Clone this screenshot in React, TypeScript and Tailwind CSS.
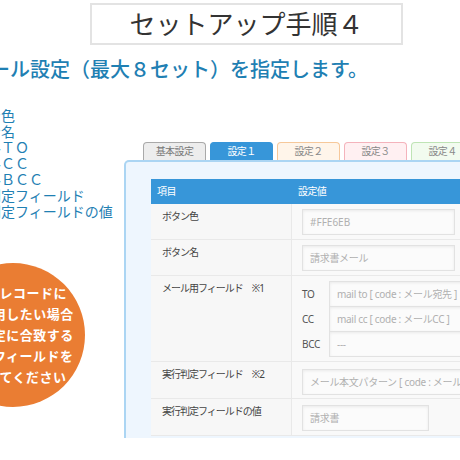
const FONT = "font-['Noto_Sans','Noto_Sans_CJK_JP',sans-serif]";

const listItems = [
  "・ボタン色",
  "・ボタン名",
  "・メールＴＯ",
  "・メールＣＣ",
  "・メールＢＣＣ",
  "・実行判定フィールド",
  "・実行判定フィールドの値",
];

const circleLines = [
  "特定のレコードに",
  "のみ適用したい場合",
  "実行判定に合致する",
  "判定用フィールドを",
  "指定してください",
];

const tabs = [
  { label: "基本設定", cls: "border-[#a9a9a9] bg-[#ededed] text-[#777]" },
  { label: "設定１", cls: "border-[#3796d9] bg-[#3796d9] text-white" },
  { label: "設定２", cls: "border-[#f6c89a] bg-[#fff5ea] text-[#888]" },
  { label: "設定３", cls: "border-[#f4b3bc] bg-[#fff0f2] text-[#888]" },
  { label: "設定４", cls: "border-[#bfe4b5] bg-[#f2fbef] text-[#888]" },
];

function Field({ text, className = "" }: { text: string; className?: string }) {
  return (
    <div
      className={`h-[26px] flex items-center pl-[7px] border border-[#e2e2e2] bg-[#fbfbfb] shadow-[inset_0_1px_3px_rgba(0,0,0,0.07)] text-[10px] tracking-[-0.3px] text-[#b0b0b0] whitespace-nowrap overflow-hidden ${className}`}
    >
      {text}
    </div>
  );
}

function Row({ label, children, h }: { label: string; children: React.ReactNode; h: string }) {
  return (
    <div className={`grid grid-cols-[141px_1fr] border-b border-[#e9e9e9] ${h}`}>
      <div className="bg-[#f7f7f7] border-r border-[#e9e9e9] pl-[11px] pt-[4px] text-[10px] leading-[16px] tracking-[-1px] text-[#444] whitespace-pre">
        {label}
      </div>
      <div className="bg-[#f9f9f9] pl-[10px] pt-[5px]">{children}</div>
    </div>
  );
}

export default function App() {
  return (
    <div className={`w-[460px] h-[460px] overflow-hidden bg-white ${FONT}`}>
      <div className="pt-[3px]">
        <div className="ml-[90px] w-[313px] h-[42px] border-2 border-[#e3e3e3] flex items-center justify-center text-[26px] leading-none text-[#333]">
          セットアップ手順４
        </div>
      </div>

      <div className="mt-[13px] ml-[-30px] whitespace-nowrap text-[20px] leading-[24px] font-medium text-[#1f80b3]">
        メール設定（最大８セット）を指定します。
      </div>

      <div className="mt-[26px] flex">
        <div className="w-[124px] shrink-0">
          <ul className="ml-[-55px] text-[14px] leading-[16px] text-[#1f80b3] whitespace-nowrap">
            {listItems.map((t) => (
              <li key={t}>{t}</li>
            ))}
          </ul>
          <div className="mt-[43px] ml-[-59px] w-[144px] h-[144px] rounded-full bg-[#ea7d33] flex flex-col items-center justify-center text-white font-bold text-[13px] leading-[21px] tracking-[0.5px] whitespace-nowrap">
            {circleLines.map((t) => (
              <div key={t}>{t}</div>
            ))}
          </div>
        </div>

        <div className="mt-[34px] w-[380px] shrink-0">
          <div className="ml-[19px] flex gap-[4px]">
            {tabs.map((t) => (
              <div
                key={t.label}
                className={`w-[63px] h-[18px] rounded-t-[4px] border border-b-0 flex items-center justify-center text-[10px] tracking-[-0.6px] ${t.cls}`}
              >
                {t.label}
              </div>
            ))}
          </div>

          <div className="h-[278px] border-2 border-b-0 border-[#abd5f3] rounded-tl-[5px] bg-[#eef6fe] pt-[17px] pl-[25px]">
            <div className="w-[330px]">
              <div className="grid grid-cols-[141px_1fr] h-[25px] bg-[#3796d9] text-white text-[10px] tracking-[-0.6px] items-center">
                <div className="pl-[6px]">項目</div>
                <div className="pl-[6px]">設定値</div>
              </div>

              <Row label="ボタン色" h="h-[36px]">
                <Field text="#FFE6EB" className="w-[153px] tracking-normal" />
              </Row>
              <Row label="ボタン名" h="h-[36px]">
                <Field text="請求書メール" className="w-[153px]" />
              </Row>
              <Row label={"メール用フィールド　※1"} h="h-[86px]">
                <div className="flex flex-col">
                  {[
                    ["TO", "mail to [ code : メール宛先 ]"],
                    ["CC", "mail cc [ code : メールCC ]"],
                    ["BCC", "---"],
                  ].map(([k, v]) => (
                    <div key={k} className="flex items-center -mt-px first:mt-0">
                      <div className="w-[27px] text-[10px] text-[#555] tracking-[-0.3px]">{k}</div>
                      <Field text={v} className="flex-1" />
                    </div>
                  ))}
                </div>
              </Row>
              <Row label={"実行判定フィールド　※2"} h="h-[37px]">
                <div className="pt-[2px]">
                  <Field text="メール本文パターン [ code : メール本文 ]" />
                </div>
              </Row>
              <Row label="実行判定フィールドの値" h="h-[37px]">
                <div className="pt-[1px]">
                  <Field text="請求書" className="w-[127px]" />
                </div>
              </Row>
            </div>
          </div>
        </div>
      </div>
    </div>
  );
}
